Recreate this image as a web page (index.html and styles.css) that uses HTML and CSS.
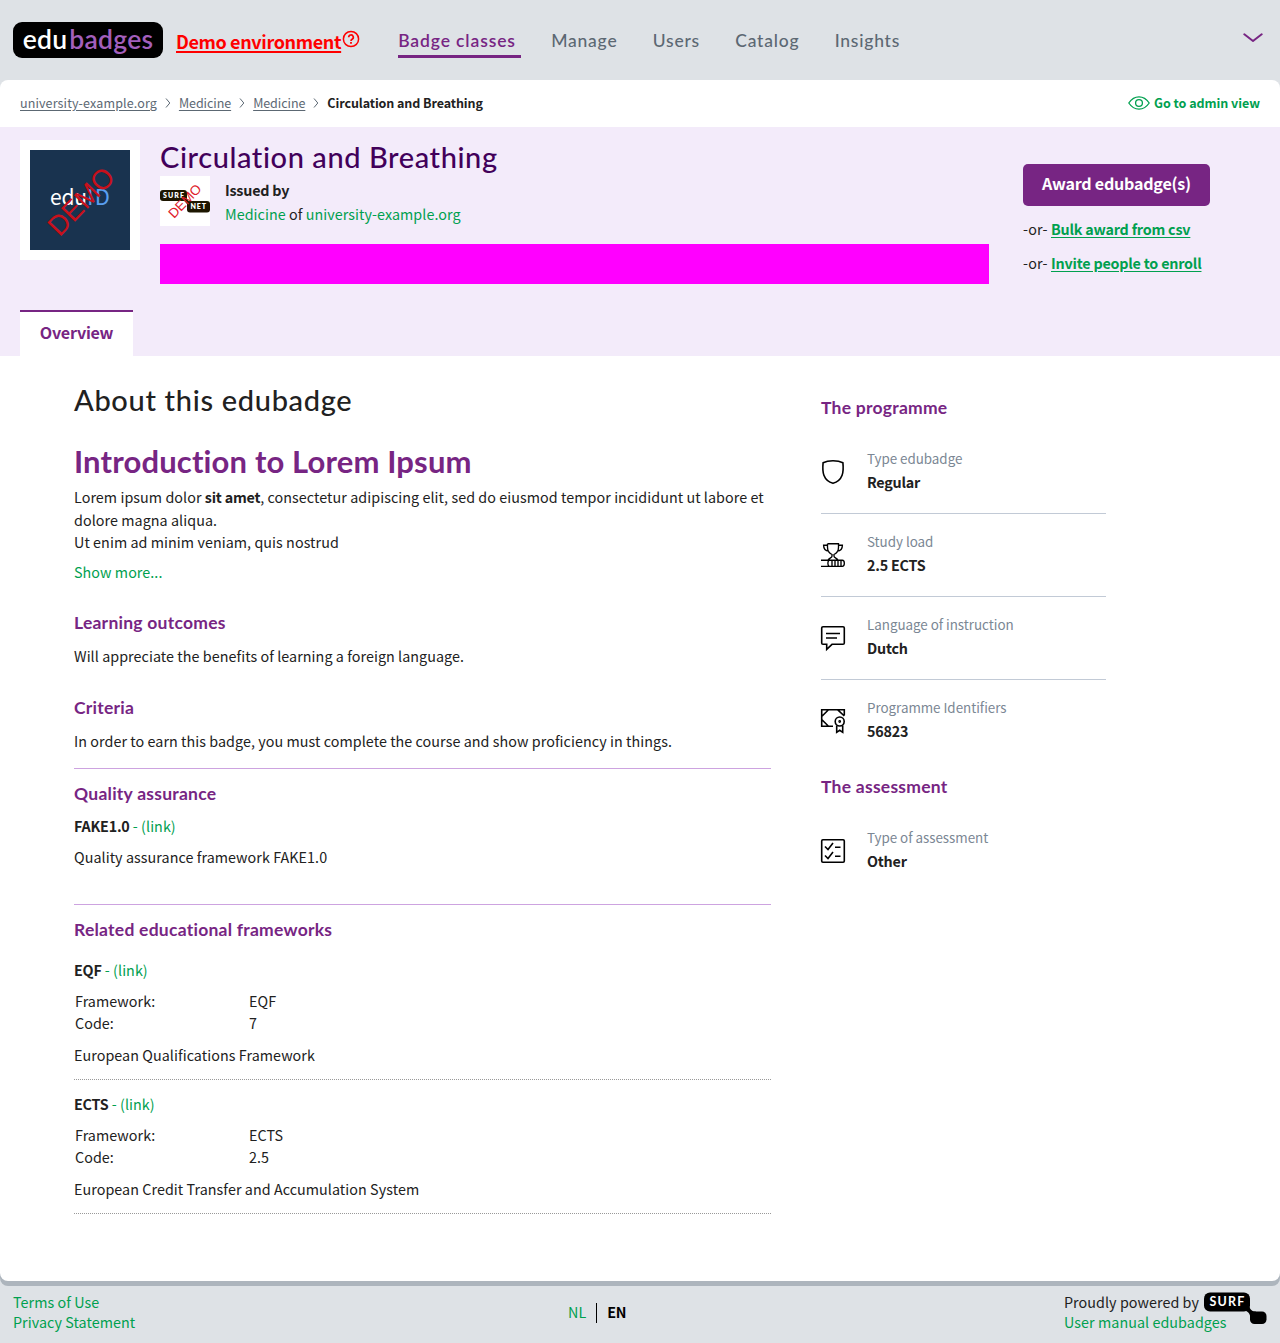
FILE: index.html
```html
<!DOCTYPE html>
<html lang="en">
<head>
<meta charset="utf-8">
<title>Circulation and Breathing - edubadges</title>
<link rel="stylesheet" href="styles.css">
</head>
<body>
<header class="topbar">
  <a class="logo"><span class="logo-edu">edu</span><span class="logo-badges">badges</span></a>
  <a class="demo"><span class="demo-text">Demo environment</span>
    <svg width="18" height="18" viewBox="0 0 18 18" fill="none" stroke="#f00" stroke-width="1.5"><circle cx="9" cy="9" r="7.6"/><path d="M6.7 7.3a2.3 2.3 0 1 1 3.4 2c-.8.5-1.1.8-1.1 1.7" stroke-width="1.7"/><path d="M9 12.1v1.7" stroke-width="1.8"/></svg>
  </a>
  <nav class="nav">
    <a class="nav-item active">Badge classes</a>
    <a class="nav-item">Manage</a>
    <a class="nav-item">Users</a>
    <a class="nav-item">Catalog</a>
    <a class="nav-item">Insights</a>
  </nav>
  <svg class="menu-toggle" width="20" height="10" viewBox="0 0 20 10" fill="none" stroke="#772583" stroke-width="2" stroke-linecap="round" stroke-linejoin="round"><path d="M1.3 1.3 10 8l8.7-6.7"/></svg>
</header>

<main class="page">
  <div class="crumbs">
    <a>university-example.org</a>
    <svg class="sep" width="6" height="10" viewBox="0 0 6 10"><path d="M1 .5 4.8 5 1 9.500"/></svg>
    <a>Medicine</a>
    <svg class="sep" width="6" height="10" viewBox="0 0 6 10"><path d="M1 .5 4.8 5 1 9.500"/></svg>
    <a>Medicine</a>
    <svg class="sep" width="6" height="10" viewBox="0 0 6 10"><path d="M1 .5 4.8 5 1 9.500"/></svg>
    <span class="current">Circulation and Breathing</span>
    <a class="admin"><svg width="22" height="14" viewBox="0 0 22 14" fill="none" stroke="#00a04f" stroke-width="1.300"><path d="M.8 7C3.500 3 7 .8 11 .8S18.500 3 21.200 7C18.500 11 15 13.200 11 13.200S3.500 11 .8 7z"/><circle cx="11" cy="7" r="3.400"/></svg><span>Go to admin view</span></a>
  </div>

  <section class="hero">
    <div class="hero-row">
      <div class="badge">
        <svg width="100" height="100" viewBox="0 0 100 100"><rect width="100" height="100" fill="#19334f"/><text x="20" y="55" font-family="Noto Sans CJK SC, sans-serif" font-size="21" fill="#fff" textLength="37">edu</text><text x="57" y="55" font-family="Noto Sans CJK SC, sans-serif" font-size="22" fill="#5a9ff0" textLength="23">ID</text><text x="0" y="0" transform="translate(29.500 87.500) rotate(-46)" font-family="Liberation Sans, sans-serif" font-size="28" fill="#c8101b" textLength="82" lengthAdjust="spacingAndGlyphs">DEMO</text></svg>
      </div>
      <div class="hero-info">
        <h1 class="title">Circulation and Breathing</h1>
        <div class="issuer">
          <svg width="50" height="50" viewBox="0 0 50 50"><rect width="50" height="50" fill="#fff"/><rect x="0" y="14" width="27" height="11" rx="3" fill="#1d1600"/><path d="M24 22l5 6" stroke="#1d1600" stroke-width="3"/><rect x="27" y="25" width="23" height="11.500" rx="3" fill="#1d1600"/><text x="3" y="22.300" class="mini" textLength="21">SURF</text><text x="30.500" y="33.300" class="mini" textLength="15.500">NET</text><text transform="translate(14 43) rotate(-46)" font-family="Liberation Sans, sans-serif" font-size="13.500" fill="#e0202a" textLength="41" lengthAdjust="spacingAndGlyphs">DEMO</text></svg>
          <div class="issuer-text"><strong>Issued by</strong><span><a>Medicine</a> of <a>university-example.org</a></span></div>
        </div>
        <div class="banner"></div>
      </div>
      <div class="actions">
        <button class="award">Award edubadge(s)</button>
        <div class="alt">-or- <a>Bulk award from csv</a></div>
        <div class="alt">-or- <a>Invite people to enroll</a></div>
      </div>
    </div>
    <div class="tab">Overview</div>
  </section>

  <div class="content">
    <article class="left">
      <h2 class="about">About this edubadge</h2>
      <h1 class="intro">Introduction to Lorem Ipsum</h1>
      <p class="desc">Lorem ipsum dolor <strong>sit amet</strong>, consectetur adipiscing elit, sed do eiusmod tempor incididunt ut labore et dolore magna aliqua.<br>Ut enim ad minim veniam, quis nostrud</p>
      <p class="more"><a>Show more...</a></p>
      <h3 class="outcomes">Learning outcomes</h3>
      <p class="after-head">Will appreciate the benefits of learning a foreign language.</p>
      <h3 class="criteria">Criteria</h3>
      <p class="after-head">In order to earn this badge, you must complete the course and show proficiency in things.</p>
      <section class="quality">
        <h3>Quality assurance</h3>
        <p class="fw-name"><strong>FAKE1.0</strong><a> - (link)</a></p>
        <p class="fw-desc">Quality assurance framework FAKE1.0</p>
      </section>
      <section class="frameworks">
        <h3>Related educational frameworks</h3>
        <div class="fw">
          <p><strong>EQF</strong><a> - (link)</a></p>
          <dl><dt>Framework:</dt><dd>EQF</dd><dt>Code:</dt><dd>7</dd></dl>
          <p>European Qualifications Framework</p>
        </div>
        <div class="fw">
          <p><strong>ECTS</strong><a> - (link)</a></p>
          <dl><dt>Framework:</dt><dd>ECTS</dd><dt>Code:</dt><dd>2.5</dd></dl>
          <p>European Credit Transfer and Accumulation System</p>
        </div>
      </section>
    </article>

    <aside class="right">
      <h3>The programme</h3>
      <div class="facts">
        <div class="fact">
          <svg class="icon" viewBox="0 0 24 24"><path d="M12 .7c3.800 0 7 .5 9.900 2 .4 4.200.6 8.800-.8 12.600-1.600 4.200-5.200 7-9.100 8-3.900-1-7.500-3.800-9.100-8C1.500 11.500 1.700 6.900 2.100 2.700 5 1.200 8.200.7 12 .7z"/></svg>
          <div><span>Type edubadge</span><strong>Regular</strong></div>
        </div>
        <div class="fact">
          <svg class="icon thin" viewBox="0 0 24 24"><path d="M6.500.7h11v3.500c0 3.800-2.200 6.300-4.500 7.300v1.700c0 1.600 3.500 2.100 4 4M6.500.7v3.500c0 3.800 2.200 6.300 4.500 7.300v1.700c0 1.600-3.500 2.100-4 4M6.500 2.200H2.600c0 4 1.500 5.600 5.200 5.800M17.500 2.200h3.900c0 4-1.500 5.600-5.200 5.800M0 17.200h21.300c2.700 0 2.700 6.100 0 6.100H0M8 17.200c-1.500 1.500-1.500 4.600 0 6.100M11 17.200v6.100M14 17.200v6.100M17 17.200v6.100M20 17.200v6.100"/></svg>
          <div><span>Study load</span><strong>2.5 ECTS</strong></div>
        </div>
        <div class="fact">
          <svg class="icon" viewBox="0 0 24 24"><path d="M2 .7h20q1.300 0 1.300 1.300v15q0 1.300-1.300 1.300H11l-5.300 5v-5H2Q.7 18.300.7 17V2Q.7.700 2 .7zM5 7.500h14M5 12h11"/></svg>
          <div><span>Language of instruction</span><strong>Dutch</strong></div>
        </div>
        <div class="fact">
          <svg class="icon" viewBox="0 0 24 24"><path d="M12 17.300H.7V.7h22.600v5.500M.7 7.500 7.500.7M.7 10.500l6.800 6.800M16.500.7l6.800 6.300"/><circle cx="18.700" cy="12.500" r="4.500"/><circle cx="18.700" cy="12.500" r=".6"/><path d="M15.700 16.500v6.800l3-2 3 2v-6.800"/></svg>
          <div><span>Programme Identifiers</span><strong>56823</strong></div>
        </div>
      </div>
      <h3>The assessment</h3>
      <div class="facts">
        <div class="fact">
          <svg class="icon" viewBox="0 0 24 24"><rect x=".7" y=".7" width="22.600" height="22.600" rx="1.200"/><path d="m4 7.500 3 3 5-6.500M14 8.200h5.500M4 16.500l3 3 5-6.500M14 17.200h5.500"/></svg>
          <div><span>Type of assessment</span><strong>Other</strong></div>
        </div>
      </div>
    </aside>
  </div>
</main>

<footer class="footer">
  <div class="foot-links"><a>Terms of Use</a><a>Privacy Statement</a></div>
  <div class="langs"><a>NL</a><strong>EN</strong></div>
  <div class="powered">
    <div class="foot-links"><span>Proudly powered by</span><a>User manual edubadges</a></div>
    <svg class="surf" width="63" height="33" viewBox="0 0 63 33"><rect y=".5" width="46" height="19" rx="6"/><path d="M40 18.500c4 .5 6 3 6.500 7.500L52 19.500c-4 0-6-2-7-6z"/><rect x="46" y="19.500" width="16.500" height="12.500" rx="4.500"/><text x="5.500" y="14.300" fill="#fff" font-family="Lato, sans-serif" font-weight="700" font-size="12.500" textLength="35">SURF</text></svg>
  </div>
</footer>
</body>
</html>
```
FILE: styles.css
```css
* { box-sizing: border-box; }
body {
  margin: 0;
  background: #dee2e6;
  color: #212121;
  font: 14.32px/24px "Noto Sans CJK SC", "Noto Sans", sans-serif;
  letter-spacing: .06px;
}
h1, h2, h3, p, dl, dd { margin: 0; }
a { color: #00a04f; }
strong { letter-spacing: -.22px; }
h1, h2, h3, .nav, .logo { font-family: Lato, sans-serif; font-variant-ligatures: none; }

.topbar { height: 80px; display: flex; align-items: flex-start; padding: 0 17px 0 13px; }
.logo {
  width: 150px; height: 36px; margin-top: 22px; border-radius: 9px; background: #000;
  display: flex; justify-content: center; gap: 2px; font-size: 26.5px; line-height: 34px;
  font-weight: 600; letter-spacing: .25px; white-space: nowrap;
}
.logo-edu { color: #fff; }
.logo-badges { color: #a35fbc; }
.demo { display: flex; margin: 30px 0 0 13px; color: #f00; gap: 1px; }
.demo-text { margin-top: -1px; font-size: 18px; letter-spacing: -.38px; font-weight: 600; text-decoration: underline; text-underline-offset: 2px; text-decoration-thickness: 2px; }
.nav { display: flex; margin: 29px 0 0 38px; font-size: 17.5px; letter-spacing: .78px; font-weight: 500; }
.nav-item { color: #5c6873; height: 29px; margin-right: 30px; padding-right: 5.3px; }
.nav-item.active { color: #772583; border-bottom: 3px solid #772583; font-weight: 600; letter-spacing: .88px; }
.menu-toggle { margin: 33px 0 0 auto; }

.page { background: #fff; height: 1201px; border-radius: 8px; box-shadow: 0 5px #adb5bd; }
.crumbs { height: 47px; padding: 0 20px 1px; display: flex; align-items: center; gap: 8px; font-size: 12.53px; }
.crumbs a { color: #5c6873; letter-spacing: -.06px; text-decoration: underline; text-underline-offset: 2px; }
.crumbs a:first-child { letter-spacing: .12px; }
.sep { fill: none; stroke: #5c6873; }
.current { font-weight: 600; letter-spacing: -.09px; }
.crumbs .admin { margin-left: auto; display: flex; align-items: center; gap: 4px; color: #00a04f; text-decoration: none; font-weight: 600; letter-spacing: -.04px; }

.hero { height: 229px; background: #f3ebfa; padding: 13px 20px 0; display: flex; flex-direction: column; justify-content: space-between; }
.hero-row { display: flex; }
.badge { width: 120px; height: 120px; padding: 10px; background: #fff; flex: none; }
.badge svg, .issuer svg { display: block; }
.hero-info { width: 829px; margin-left: 20px; }
.title { height: 36px; font-size: 29px; line-height: 34px; font-weight: 500; letter-spacing: .58px; color: #42005a; }
.issuer { display: flex; height: 50px; }
.issuer-text { display: flex; flex-direction: column; margin: 2px 0 0 15px; }
.mini { font: 800 7px Lato, sans-serif; fill: #fff; }
.banner { margin-top: 18px; height: 40px; background: #f0f; }
.actions { margin: 24px 0 0 34px; }
.award { display: block; width: 187px; height: 42px; padding: 0 0 4px; border: 0; border-radius: 5px; background: #772583; color: #fff; font: 600 16.1px/24px "Noto Sans CJK SC", sans-serif; letter-spacing: -.25px; }
.alt { margin-top: 10px; letter-spacing: .2px; }
.award + .alt { margin-top: 11px; }
.alt a { font-weight: 600; letter-spacing: -.2px; text-decoration: underline; text-underline-offset: 2px; }
.tab { width: 113px; height: 46px; background: #fff; border-top: 2px solid #772583; color: #772583; font-weight: 600; font-size: 16.1px; line-height: 40px; letter-spacing: -.25px; text-align: center; }

.content { display: flex; padding-left: 74px; }
.left { width: 697px; padding-top: 26px; }
.about { font-size: 29px; line-height: 36px; font-weight: 500; letter-spacing: .68px; }
.intro { margin-top: 24px; font-size: 31px; line-height: 38px; font-weight: 700; letter-spacing: .15px; color: #772583; }
.desc { margin-top: 6px; line-height: 22.5px; }
.more { margin-top: 6px; }
h3 { color: #772583; font-size: 17.5px; line-height: 24px; font-weight: 700; letter-spacing: .25px; }
.outcomes { margin-top: 27px; }
.criteria { margin-top: 28px; }
.after-head { margin-top: 9px; }
.quality { margin-top: 15px; height: 136px; border-top: 1px solid #cda3e0; padding-top: 13px; }
.fw-name { margin-top: 8px; }
.fw-desc { margin-top: 7px; }
.frameworks { border-top: 1px solid #cda3e0; padding-top: 13px; }
.fw { height: 134px; padding-top: 12px; border-bottom: 1px dotted #999; }
h3 + .fw { height: 138px; padding-top: 16px; }
.fw dl { display: grid; grid-template-columns: 174px 1fr; margin: 8px 0 9px 1px; line-height: 22px; }

.right { width: 285px; margin-left: 50px; padding-top: 40px; }
.facts { padding-top: 10px; }
.fact { height: 83px; display: flex; gap: 22px; padding-top: 15px; border-bottom: 1px solid #c2cad6; }
.fact:last-child { height: 95px; border: 0; }
.fact:first-child { margin-top: 1px; }
.fact > div { display: flex; flex-direction: column; }
.fact span { color: #7b8794; font-size: 13.4px; letter-spacing: -.03px; }
.icon { width: 24px; height: 24px; margin-top: 14px; fill: none; stroke: #000; stroke-width: 1.6; overflow: visible; }
.icon.thin { stroke-width: 1.35; }

.footer { height: 62px; padding: 11px 13px 0; display: flex; justify-content: space-between; position: relative; }
.foot-links { display: flex; flex-direction: column; line-height: 20px; }
.langs { position: absolute; left: 568px; top: 22px; display: flex; line-height: 18px; }
.langs a { height: 20px; padding-right: 10px; border-right: 1px solid #000; }
.langs strong { padding-left: 10px; color: #000; }
.powered { width: 203px; position: relative; }
.surf { position: absolute; left: 140px; top: 0; }
```
